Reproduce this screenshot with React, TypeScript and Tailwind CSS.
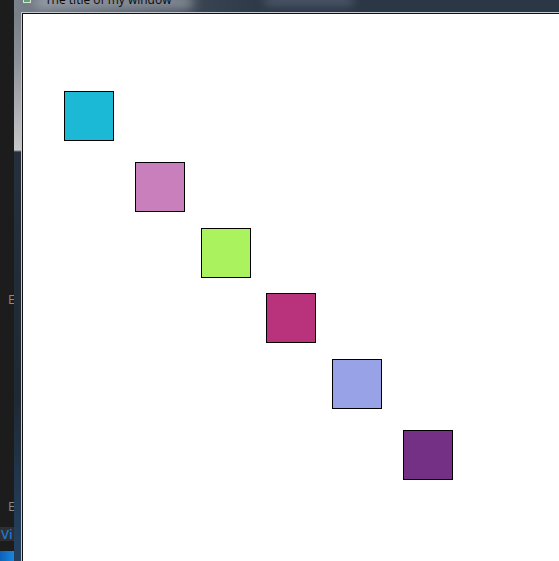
const squares = [
  { left: 41, top: 77, color: "bg-[#1bb9d5]" },
  { left: 112, top: 148, color: "bg-[#c97fbb]" },
  { left: 178, top: 214, color: "bg-[#aaf35e]" },
  { left: 243, top: 279, color: "bg-[#b8327c]" },
  { left: 309, top: 345, color: "bg-[#97a3e6]" },
  { left: 380, top: 416, color: "bg-[#733084]" },
];

export default function App() {
  return (
    <div className="flex h-[561px] w-[559px] overflow-hidden bg-[#1b1b1b] font-['Open_Sans',sans-serif]">
      {/* desktop strip behind the window */}
      <div className="relative w-[14px] shrink-0 overflow-hidden bg-[#1c1c1c]">
        <span className="absolute left-[8px] top-[293px] text-[13px] leading-none text-[#8a8a8a]">E</span>
        <span className="absolute left-[8px] top-[500px] text-[13px] leading-none text-[#8a8a8a]">E</span>
        <div className="absolute left-0 top-[527px] h-[14px] w-full bg-[#2f2f2f]">
          <span className="absolute left-[1px] top-0 text-[13px] font-semibold leading-[14px] text-[#2176d2]">Vi</span>
        </div>
        <div className="absolute bottom-0 left-0 h-[10px] w-full bg-gradient-to-r from-[#0b63b8] to-[#1a86e0]" />
      </div>

      {/* window */}
      <div className="flex flex-1 flex-col bg-[linear-gradient(180deg,#737a83_0px,#8c9198_60px,#c6c8ca_150px,#26303c_152px,#1f2934_400px,#24405e_540px)]">
        <div className="relative h-[12px] shrink-0 overflow-hidden bg-[linear-gradient(90deg,#7b838d_0px,#5e6874_40px,#3a4553_180px,#2c3746_260px,#2c3746_100%)]">
          <div className="absolute left-[9px] top-[-4px] h-[7px] w-[8px] border border-[#d9e3d9] bg-[#5aa36a]" />
          <div className="absolute left-[20px] top-[-6px] h-[16px] w-[160px] rounded-full bg-[#c9ced3]/50 blur-[6px]" />
          <div className="absolute left-[250px] top-[-4px] h-[10px] w-[90px] rounded-full bg-[#6b7b90]/50 blur-[5px]" />
          <span className="absolute left-[31px] top-[-8px] whitespace-nowrap text-[12px] leading-[15px] text-[#0a0a0a]">
            The title of my window
          </span>
        </div>
        <div className="flex flex-1 pl-[7px]">
          <div className="flex flex-1 border-l border-t border-[#c4c9cf]">
            <div className="relative flex-1 border-l border-t border-[#111111] bg-white">
              {squares.map((s) => (
                <div
                  key={s.left}
                  className={`absolute h-[50px] w-[50px] border border-black ${s.color}`}
                  style={{ left: s.left, top: s.top }}
                />
              ))}
            </div>
          </div>
        </div>
      </div>
    </div>
  );
}
